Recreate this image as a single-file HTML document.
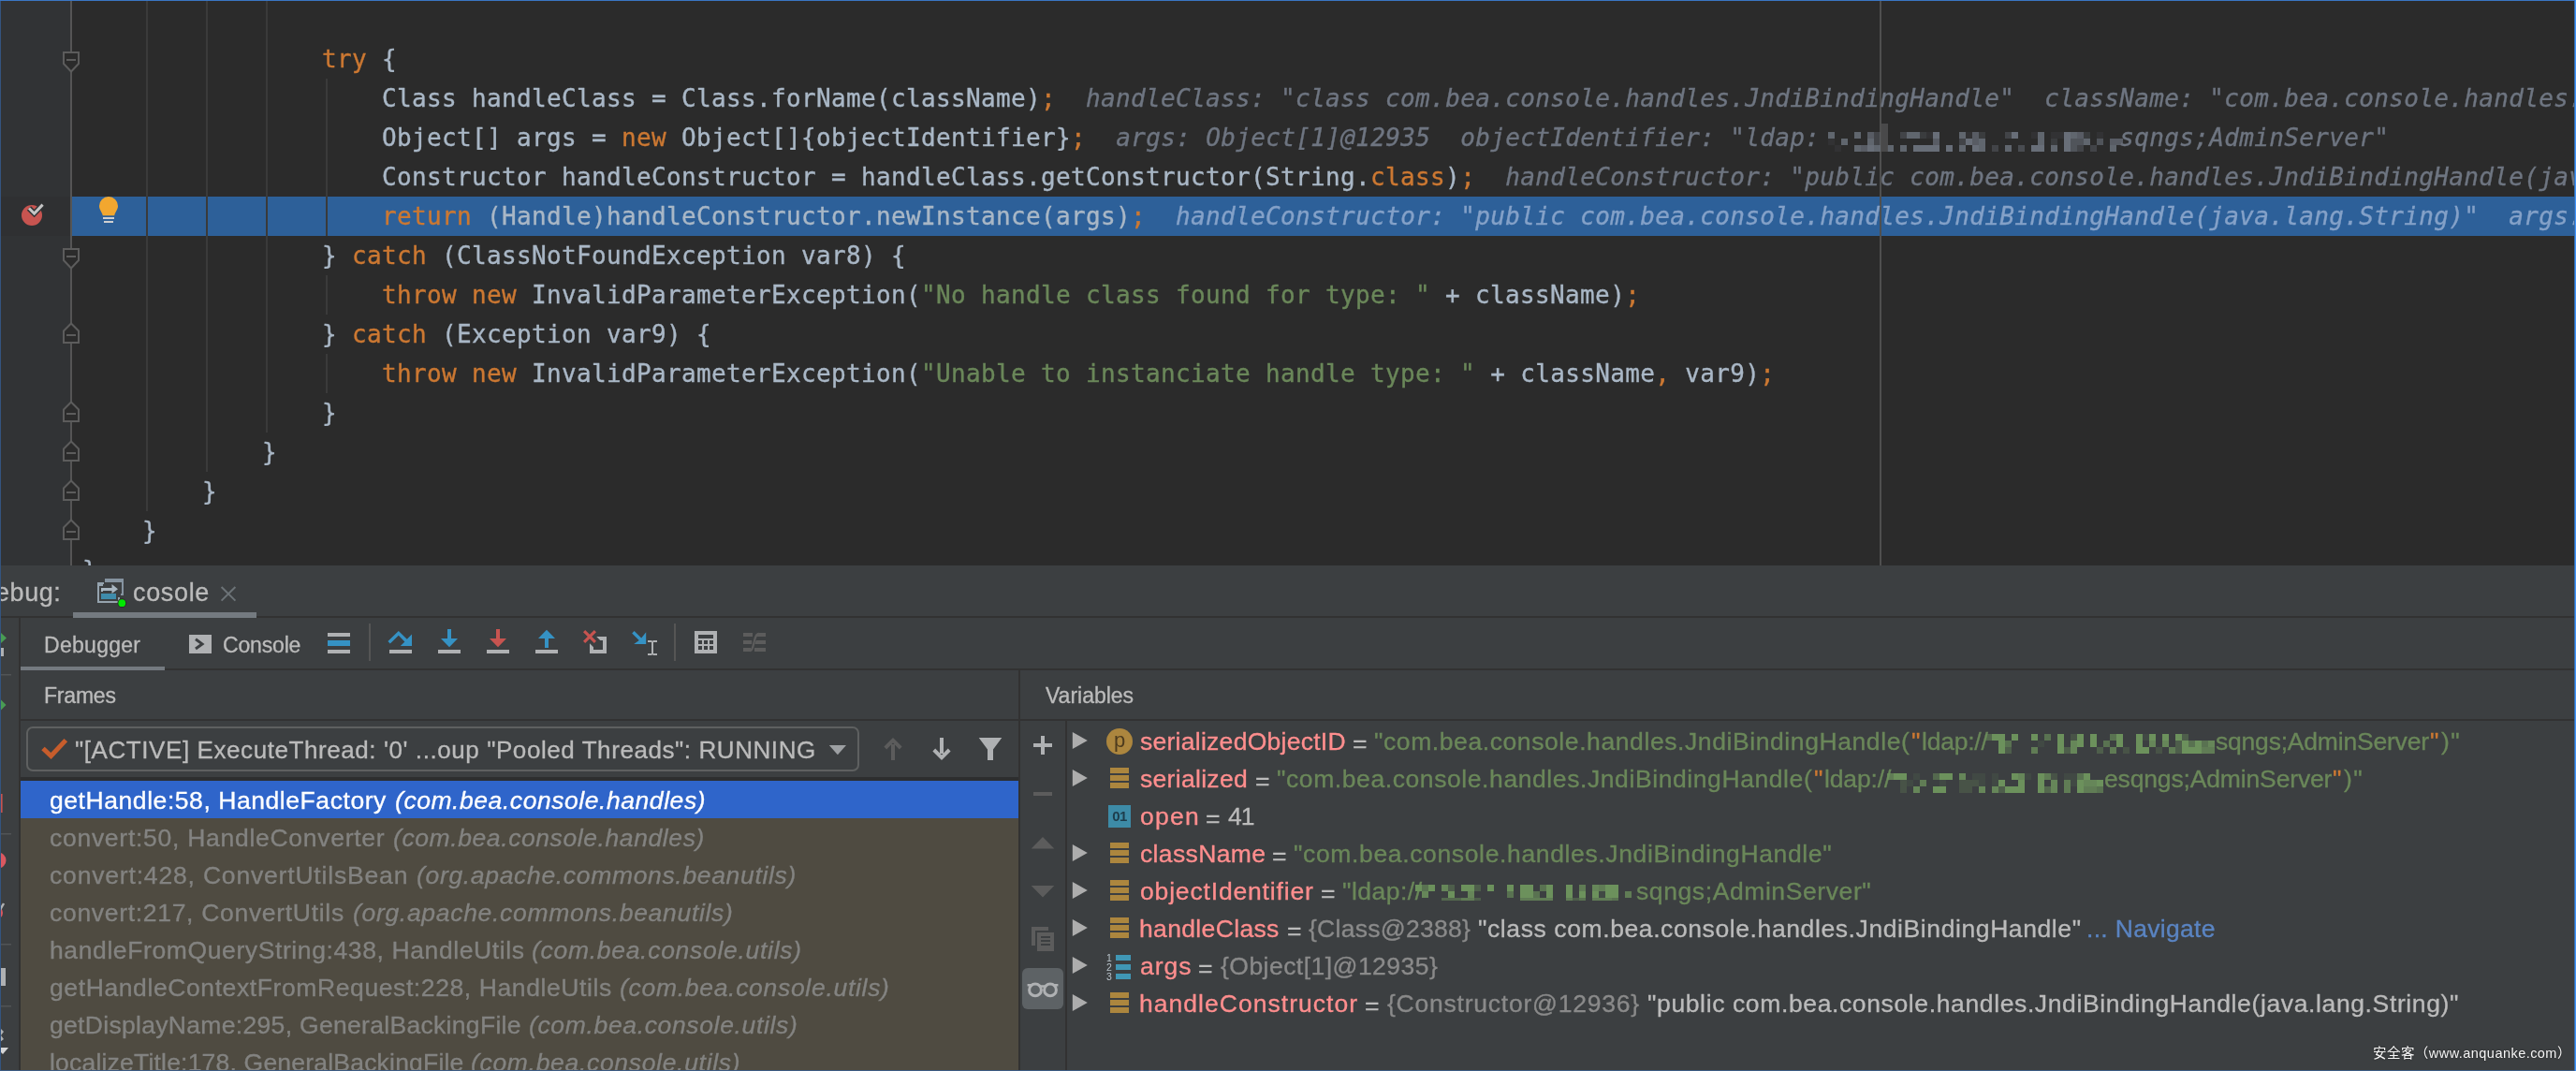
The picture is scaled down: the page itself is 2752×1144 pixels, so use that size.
<!DOCTYPE html>
<html lang="en"><head><meta charset="utf-8"><title>Debug - cosole</title>
<style>
html,body{margin:0;padding:0;background:#2b2b2b;}
body{width:2752px;height:1144px;overflow:hidden;}
#root{position:relative;width:2752px;height:1144px;overflow:hidden;background:#2b2b2b;}
#root div,#root svg,#root span.t{position:absolute;}
.code,.ui,span.t{will-change:transform;}
.code{font-family:"DejaVu Sans Mono","Liberation Mono",monospace;font-size:26px;line-height:42px;height:42px;white-space:pre;color:#a9b7c6;letter-spacing:0.348px;-webkit-text-stroke:0.35px currentColor;}
.code i{color:#6e7581;font-style:italic;}
.code b{font-weight:normal;color:#cc7832;}
.code u{text-decoration:none;color:#6a8759;}
.ui{font-family:"Liberation Sans",sans-serif;font-size:26px;line-height:40px;height:40px;white-space:pre;color:#bbbbbb;-webkit-text-stroke:0.33px currentColor;}
.ui i{font-style:italic;}
</style></head>
<body><div id="root">
<div style="left:0px;top:0px;width:76px;height:604px;background:#313335;"></div>
<div style="left:75px;top:0px;width:2px;height:604px;background:#555555;"></div>
<div style="left:1px;top:210px;width:74px;height:42px;background:#2f3032;"></div>
<div style="left:77px;top:210px;width:2675px;height:42px;background:#2d6099;"></div>
<div style="left:156px;top:0px;width:2px;height:546px;background:#3a3a3a;"></div>
<div style="left:220px;top:0px;width:2px;height:504px;background:#3a3a3a;"></div>
<div style="left:284px;top:0px;width:2px;height:462px;background:#3a3a3a;"></div>
<div style="left:348px;top:84px;width:2px;height:168px;background:#3a3a3a;"></div>
<div style="left:348px;top:294px;width:2px;height:42px;background:#3a3a3a;"></div>
<div style="left:348px;top:378px;width:2px;height:42px;background:#3a3a3a;"></div>
<div style="left:2008px;top:0px;width:2px;height:604px;background:#4f4f4f;"></div>
<div class="code" style="left:344.0px;top:42px;"><b>try</b> {</div>
<div class="code" style="left:408.0px;top:84px;">Class handleClass = Class.forName(className)<b>;</b>  <i>handleClass: "class com.bea.console.handles.JndiBindingHandle"  className: "com.bea.console.handles.JndiBindingHandle"</i></div>
<div class="code" style="left:408.0px;top:126px;">Object[] args = <b>new</b> Object[]{objectIdentifier}<b>;</b>  <i>args: Object[1]@12935  objectIdentifier: "ldap:</i>                    <i>sqngs;AdminServer"</i></div>
<div class="code" style="left:408.0px;top:168px;">Constructor handleConstructor = handleClass.getConstructor(String.<b>class</b>)<b>;</b>  <i>handleConstructor: "public com.bea.console.handles.JndiBindingHandle(java.lang.String)"</i></div>
<div class="code" style="left:408.0px;top:210px;"><b>return</b> (Handle)handleConstructor.newInstance(args)<b>;</b>  <i style="color:#84a1c8">handleConstructor: "public com.bea.console.handles.JndiBindingHandle(java.lang.String)"  args: Object[1]@12935</i></div>
<div class="code" style="left:344.0px;top:252px;">} <b>catch</b> (ClassNotFoundException var8) {</div>
<div class="code" style="left:408.0px;top:294px;"><b>throw new</b> InvalidParameterException(<u>"No handle class found for type: "</u> + className)<b>;</b></div>
<div class="code" style="left:344.0px;top:336px;">} <b>catch</b> (Exception var9) {</div>
<div class="code" style="left:408.0px;top:378px;"><b>throw new</b> InvalidParameterException(<u>"Unable to instanciate handle type: "</u> + className<b>,</b> var9)<b>;</b></div>
<div class="code" style="left:344.0px;top:420px;">}</div>
<div class="code" style="left:280.0px;top:462px;">}</div>
<div class="code" style="left:216.0px;top:504px;">}</div>
<div class="code" style="left:152.0px;top:546px;">}</div>
<div class="code" style="left:88.0px;top:588px;">}</div>
<div style="left:1953px;top:141px;width:7px;height:7px;background:rgba(104,110,120,0.88);"></div>
<div style="left:1981px;top:141px;width:7px;height:7px;background:rgba(104,110,120,0.88);"></div>
<div style="left:1995px;top:141px;width:7px;height:7px;background:rgba(104,110,120,0.75);"></div>
<div style="left:2002px;top:141px;width:7px;height:7px;background:rgba(104,110,120,0.38);"></div>
<div style="left:2030px;top:141px;width:7px;height:7px;background:rgba(104,110,120,0.38);"></div>
<div style="left:2037px;top:141px;width:7px;height:7px;background:rgba(104,110,120,0.88);"></div>
<div style="left:2044px;top:141px;width:7px;height:7px;background:rgba(104,110,120,0.88);"></div>
<div style="left:2051px;top:141px;width:7px;height:7px;background:rgba(104,110,120,0.25);"></div>
<div style="left:2058px;top:141px;width:7px;height:7px;background:rgba(104,110,120,0.12);"></div>
<div style="left:2065px;top:141px;width:7px;height:7px;background:rgba(104,110,120,1.00);"></div>
<div style="left:2093px;top:141px;width:7px;height:7px;background:rgba(104,110,120,0.88);"></div>
<div style="left:2100px;top:141px;width:7px;height:7px;background:rgba(104,110,120,0.12);"></div>
<div style="left:2107px;top:141px;width:7px;height:7px;background:rgba(104,110,120,0.75);"></div>
<div style="left:2114px;top:141px;width:7px;height:7px;background:rgba(104,110,120,0.25);"></div>
<div style="left:2142px;top:141px;width:7px;height:7px;background:rgba(104,110,120,0.38);"></div>
<div style="left:2149px;top:141px;width:7px;height:7px;background:rgba(104,110,120,1.00);"></div>
<div style="left:2170px;top:141px;width:7px;height:7px;background:rgba(104,110,120,0.12);"></div>
<div style="left:2177px;top:141px;width:7px;height:7px;background:rgba(104,110,120,0.88);"></div>
<div style="left:2191px;top:141px;width:7px;height:7px;background:rgba(104,110,120,0.12);"></div>
<div style="left:2198px;top:141px;width:7px;height:7px;background:rgba(104,110,120,0.12);"></div>
<div style="left:2205px;top:141px;width:7px;height:7px;background:rgba(104,110,120,1.00);"></div>
<div style="left:2212px;top:141px;width:7px;height:7px;background:rgba(104,110,120,0.88);"></div>
<div style="left:2219px;top:141px;width:7px;height:7px;background:rgba(104,110,120,0.75);"></div>
<div style="left:2226px;top:141px;width:7px;height:7px;background:rgba(104,110,120,0.25);"></div>
<div style="left:2240px;top:141px;width:7px;height:7px;background:rgba(104,110,120,0.12);"></div>
<div style="left:1953px;top:148px;width:7px;height:7px;background:rgba(104,110,120,0.12);"></div>
<div style="left:1967px;top:148px;width:7px;height:7px;background:rgba(104,110,120,0.88);"></div>
<div style="left:1995px;top:148px;width:7px;height:7px;background:rgba(104,110,120,0.88);"></div>
<div style="left:2002px;top:148px;width:7px;height:7px;background:rgba(104,110,120,0.38);"></div>
<div style="left:2065px;top:148px;width:7px;height:7px;background:rgba(104,110,120,0.75);"></div>
<div style="left:2093px;top:148px;width:7px;height:7px;background:rgba(104,110,120,0.38);"></div>
<div style="left:2100px;top:148px;width:7px;height:7px;background:rgba(104,110,120,1.00);"></div>
<div style="left:2107px;top:148px;width:7px;height:7px;background:rgba(104,110,120,0.75);"></div>
<div style="left:2114px;top:148px;width:7px;height:7px;background:rgba(104,110,120,0.88);"></div>
<div style="left:2177px;top:148px;width:7px;height:7px;background:rgba(104,110,120,0.88);"></div>
<div style="left:2191px;top:148px;width:7px;height:7px;background:rgba(104,110,120,0.25);"></div>
<div style="left:2205px;top:148px;width:7px;height:7px;background:rgba(104,110,120,1.00);"></div>
<div style="left:2212px;top:148px;width:7px;height:7px;background:rgba(104,110,120,0.62);"></div>
<div style="left:2219px;top:148px;width:7px;height:7px;background:rgba(104,110,120,0.62);"></div>
<div style="left:2226px;top:148px;width:7px;height:7px;background:rgba(104,110,120,0.88);"></div>
<div style="left:2240px;top:148px;width:7px;height:7px;background:rgba(104,110,120,0.62);"></div>
<div style="left:2254px;top:148px;width:7px;height:7px;background:rgba(104,110,120,0.75);"></div>
<div style="left:2261px;top:148px;width:7px;height:7px;background:rgba(104,110,120,0.75);"></div>
<div style="left:1960px;top:155px;width:7px;height:7px;background:rgba(104,110,120,0.12);"></div>
<div style="left:1981px;top:155px;width:7px;height:7px;background:rgba(104,110,120,0.88);"></div>
<div style="left:1988px;top:155px;width:7px;height:7px;background:rgba(104,110,120,0.75);"></div>
<div style="left:1995px;top:155px;width:7px;height:7px;background:rgba(104,110,120,1.00);"></div>
<div style="left:2002px;top:155px;width:7px;height:7px;background:rgba(104,110,120,0.88);"></div>
<div style="left:2016px;top:155px;width:7px;height:7px;background:rgba(104,110,120,0.88);"></div>
<div style="left:2030px;top:155px;width:7px;height:7px;background:rgba(104,110,120,0.88);"></div>
<div style="left:2044px;top:155px;width:7px;height:7px;background:rgba(104,110,120,1.00);"></div>
<div style="left:2051px;top:155px;width:7px;height:7px;background:rgba(104,110,120,1.00);"></div>
<div style="left:2058px;top:155px;width:7px;height:7px;background:rgba(104,110,120,1.00);"></div>
<div style="left:2065px;top:155px;width:7px;height:7px;background:rgba(104,110,120,1.00);"></div>
<div style="left:2079px;top:155px;width:7px;height:7px;background:rgba(104,110,120,1.00);"></div>
<div style="left:2093px;top:155px;width:7px;height:7px;background:rgba(104,110,120,0.88);"></div>
<div style="left:2107px;top:155px;width:7px;height:7px;background:rgba(104,110,120,1.00);"></div>
<div style="left:2114px;top:155px;width:7px;height:7px;background:rgba(104,110,120,0.88);"></div>
<div style="left:2128px;top:155px;width:7px;height:7px;background:rgba(104,110,120,0.38);"></div>
<div style="left:2142px;top:155px;width:7px;height:7px;background:rgba(104,110,120,0.88);"></div>
<div style="left:2156px;top:155px;width:7px;height:7px;background:rgba(104,110,120,0.50);"></div>
<div style="left:2170px;top:155px;width:7px;height:7px;background:rgba(104,110,120,1.00);"></div>
<div style="left:2177px;top:155px;width:7px;height:7px;background:rgba(104,110,120,1.00);"></div>
<div style="left:2191px;top:155px;width:7px;height:7px;background:rgba(104,110,120,0.88);"></div>
<div style="left:2205px;top:155px;width:7px;height:7px;background:rgba(104,110,120,1.00);"></div>
<div style="left:2212px;top:155px;width:7px;height:7px;background:rgba(104,110,120,0.62);"></div>
<div style="left:2219px;top:155px;width:7px;height:7px;background:rgba(104,110,120,0.38);"></div>
<div style="left:2233px;top:155px;width:7px;height:7px;background:rgba(104,110,120,0.38);"></div>
<div style="left:2254px;top:155px;width:7px;height:7px;background:rgba(104,110,120,0.88);"></div>
<div style="left:2010px;top:132px;width:7px;height:30px;background:rgba(76,76,78,0.9);"></div>
<svg style="left:65px;top:54px" width="22" height="25" viewBox="65 54 22 25"><path d="M68,56 H84 V68 L76,76.5 L68,68 Z" fill="#2b2b2b" stroke="#5c5c5c" stroke-width="2" stroke-linejoin="miter"/><rect x="71" y="63" width="10" height="2" fill="#5c5c5c"/></svg>
<svg style="left:65px;top:264px" width="22" height="25" viewBox="65 264 22 25"><path d="M68,266 H84 V278 L76,286.5 L68,278 Z" fill="#2b2b2b" stroke="#5c5c5c" stroke-width="2" stroke-linejoin="miter"/><rect x="71" y="273" width="10" height="2" fill="#5c5c5c"/></svg>
<svg style="left:65px;top:343px" width="22" height="25" viewBox="65 343 22 25"><path d="M76,345.5 L84,353.5 V366 H68 V353.5 Z" fill="#2b2b2b" stroke="#5c5c5c" stroke-width="2" stroke-linejoin="miter"/><rect x="71" y="357" width="10" height="2" fill="#5c5c5c"/></svg>
<svg style="left:65px;top:427px" width="22" height="25" viewBox="65 427 22 25"><path d="M76,429.5 L84,437.5 V450 H68 V437.5 Z" fill="#2b2b2b" stroke="#5c5c5c" stroke-width="2" stroke-linejoin="miter"/><rect x="71" y="441" width="10" height="2" fill="#5c5c5c"/></svg>
<svg style="left:65px;top:469px" width="22" height="25" viewBox="65 469 22 25"><path d="M76,471.5 L84,479.5 V492 H68 V479.5 Z" fill="#2b2b2b" stroke="#5c5c5c" stroke-width="2" stroke-linejoin="miter"/><rect x="71" y="483" width="10" height="2" fill="#5c5c5c"/></svg>
<svg style="left:65px;top:511px" width="22" height="25" viewBox="65 511 22 25"><path d="M76,513.5 L84,521.5 V534 H68 V521.5 Z" fill="#2b2b2b" stroke="#5c5c5c" stroke-width="2" stroke-linejoin="miter"/><rect x="71" y="525" width="10" height="2" fill="#5c5c5c"/></svg>
<svg style="left:65px;top:553px" width="22" height="25" viewBox="65 553 22 25"><path d="M76,555.5 L84,563.5 V576 H68 V563.5 Z" fill="#2b2b2b" stroke="#5c5c5c" stroke-width="2" stroke-linejoin="miter"/><rect x="71" y="567" width="10" height="2" fill="#5c5c5c"/></svg>
<svg style="left:20px;top:214px" width="30" height="30" viewBox="20 214 30 30"><circle cx="34" cy="230" r="11" fill="#c75450"/><path d="M31,222.5 L36.6,228 L45.6,218.6" fill="none" stroke="#313335" stroke-width="6" stroke-linecap="butt"/><path d="M31,222.5 L36.6,228 L45.6,218.6" fill="none" stroke="#c4c4c4" stroke-width="3" stroke-linecap="butt"/></svg>
<svg style="left:104px;top:208px" width="24" height="32" viewBox="104 208 24 32"><path d="M116,210 a10,10 0 0 1 10,10 c0,4 -2.5,5.5 -3.8,10.2 h-12.4 c-1.3,-4.7 -3.8,-6.2 -3.8,-10.2 a10,10 0 0 1 10,-10 z" fill="#f2a72f"/><rect x="110" y="232" width="12" height="2" fill="#d0d0d0"/><rect x="111" y="236" width="10" height="2" fill="#d0d0d0"/></svg>
<div style="left:0px;top:604px;width:2752px;height:540px;background:#3c3f41;"></div>
<div style="left:0px;top:658px;width:2752px;height:2px;background:#323232;"></div>
<div style="left:78px;top:654px;width:196px;height:6px;background:#747a80;"></div>
<span class="t ui" id="hdr_debug" style="left:-25.46px;top:612.64px;font-size:27px;color:#bbbbbb;letter-spacing:0.550px;">Debug:</span>
<span class="t ui" id="hdr_cosole" style="left:141.82px;top:612.64px;font-size:27px;color:#bbbbbb;letter-spacing:0.649px;">cosole</span>
<svg style="left:102px;top:616px" width="36" height="36" viewBox="102 616 36 36"><path d="M113,619 H131 V635 H129" fill="none" stroke="#8593a0" stroke-width="2"/><rect x="112" y="618" width="20" height="4" fill="#8593a0"/><path d="M105,623 H111 M105,623 V643 H127 V638" fill="none" stroke="#95a3ae" stroke-width="2"/><rect x="104" y="622" width="6" height="4" fill="#95a3ae"/><path d="M108,632 V628 H119.5 V624 L126,629.3 L119.5,634 V631 H110 V632 Z" fill="#a9b7c2"/><rect x="108" y="634" width="16" height="6" fill="#3f8cab"/><circle cx="130.3" cy="644.2" r="4.9" fill="#2b2b2b"/><circle cx="130.3" cy="644.2" r="3.9" fill="#00e800"/></svg>
<svg style="left:234px;top:624px" width="20" height="20" viewBox="234 624 20 20"><path d="M236.6,627 L251.4,641.6 M251.4,627 L236.6,641.6" stroke="#6c7377" stroke-width="2" fill="none"/></svg>
<div style="left:20px;top:660px;width:2px;height:484px;background:#323232;"></div>
<svg style="left:0;top:660px" width="20" height="484" viewBox="0 660 20 484"><path d="M1,676 L7,681.5 L1,687 Z" fill="#499c54"/><rect x="1" y="692" width="3" height="9" fill="#afb1b3"/><rect x="0" y="720" width="12" height="1.5" fill="#515456"/><path d="M1,747.5 L6.5,753 L1,758.5 Z" fill="#499c54"/><rect x="1" y="848" width="1.6" height="20" fill="#c75450"/><rect x="0" y="890" width="12" height="1.5" fill="#515456"/><circle cx="-2" cy="919" r="8.5" fill="#db5860"/><circle cx="-4" cy="975" r="7" fill="#db5860"/><path d="M0,972 L4,965" stroke="#afb1b3" stroke-width="2.5"/><rect x="0" y="1008" width="12" height="1.5" fill="#515456"/><rect x="1" y="1034" width="5" height="19" fill="#afb1b3"/><rect x="0" y="1074" width="12" height="1.5" fill="#515456"/><path d="M0,1098 L4,1102 L1,1106 L4,1110 L0,1113 Z" fill="#afb1b3"/><path d="M0,1119 H9 L3,1126 L0,1123 Z" fill="#d6d6d6"/></svg>
<div style="left:22px;top:714px;width:2730px;height:2px;background:#323232;"></div>
<div style="left:22px;top:712px;width:154px;height:4px;background:#747a80;"></div>
<span class="t ui" id="tab_debugger" style="left:46.86px;top:668.63px;font-size:23px;color:#bbbbbb;letter-spacing:0.287px;">Debugger</span>
<span class="t ui" id="tab_console" style="left:237.75px;top:668.63px;font-size:23px;color:#bbbbbb;letter-spacing:-0.166px;">Console</span>
<svg style="left:202px;top:678px" width="24" height="20" viewBox="0 0 24 20"><rect width="24" height="20" fill="#afb1b3"/><path d="M7,4.8 L14,9.9 L7,15" fill="none" stroke="#3c3f41" stroke-width="3"/></svg>
<svg style="left:346px;top:670px" width="32" height="32" viewBox="0 0 16 16"><rect x="2" y="3" width="12" height="2" fill="#afb1b3"/><rect x="2" y="7" width="12" height="3" fill="#3592c4"/><rect x="2" y="12" width="12" height="2" fill="#afb1b3"/></svg>
<div style="left:394px;top:666px;width:2px;height:40px;background:#555555;"></div>
<svg style="left:412px;top:670px" width="32" height="32" viewBox="0 0 16 16"><rect x="2" y="12" width="12" height="2" fill="#afb1b3"/><path d="M1.2,7.5 L6.9,2 L11.4,6.4 L14,3.7 V10 H7.9 L10.2,7.7 L6.9,4.4 L2.4,8.8 Z" fill="#3592c4"/></svg>
<svg style="left:464px;top:670px" width="32" height="32" viewBox="0 0 16 16"><rect x="2" y="12" width="12" height="2" fill="#afb1b3"/><path d="M7,1 H9 V6 H12.5 L8,10.6 L3.5,6 H7 Z" fill="#3592c4"/></svg>
<svg style="left:516px;top:670px" width="32" height="32" viewBox="0 0 16 16"><rect x="2" y="12" width="12" height="2" fill="#afb1b3"/><path d="M7,1 H9 V6 H12.5 L8,10.6 L3.5,6 H7 Z" fill="#c75450"/></svg>
<svg style="left:568px;top:670px" width="32" height="32" viewBox="0 0 16 16"><rect x="2" y="12" width="12" height="2" fill="#afb1b3"/><path d="M7,11 H9 V6 H12.5 L8,1.4 L3.5,6 H7 Z" fill="#3592c4"/></svg>
<svg style="left:620px;top:670px" width="32" height="32" viewBox="0 0 16 16"><path d="M8.6,5 H14 V14 H5 V8.6 L7,10.6 V12 H12 V7 H10.6 Z" fill="#afb1b3"/><path d="M2.6,1.5 L5,3.9 L7.4,1.5 L8.5,2.6 L6.1,5 L8.5,7.4 L7.4,8.5 L5,6.1 L2.6,8.5 L1.5,7.4 L3.9,5 L1.5,2.6 Z" fill="#c75450"/></svg>
<svg style="left:672px;top:670px" width="32" height="32" viewBox="0 0 16 16"><path d="M1.6,3.2 L2.8,2 L6.6,5.8 L9.1,2.6 V9 H2.6 L5.4,7 Z" fill="#3592c4"/><path d="M10,7 H12 L12.5,7.4 L13,7 H15 V8 H13 V14 H15 V15 H13 L12.5,14.6 L12,15 H10 V14 H12 V8 H10 Z" fill="#afb1b3"/></svg>
<div style="left:720px;top:666px;width:2px;height:40px;background:#555555;"></div>
<svg style="left:738px;top:670px" width="32" height="32" viewBox="0 0 16 16"><path fill-rule="evenodd" fill="#afb1b3" d="M2,2 H14 V14 H2 Z M4,4 V6 H12 V4 Z M4,7 V9 H6 V7 Z M4,10 V12 H6 V10 Z M7,7 V9 H9 V7 Z M7,10 V12 H9 V10 Z M10,7 V9 H12 V7 Z M10,10 V12 H12 V10 Z"/></svg>
<svg style="left:790px;top:670px" width="32" height="32" viewBox="0 0 16 16"><g fill="#5c5c5c"><path d="M2,3 H7 V5 H2 Z M2,7 H6.6 V9 H2 Z M2,11 H6 V13 H2 Z"/><path d="M9.6,3 H14 V5 H9 Z M8.8,7 H14 V9 H8.2 Z M8,11 H14 V13 H8 Z"/></g><path d="M5.5,12.6 C8,12.6 7.4,3.4 10.4,3.4" fill="none" stroke="#5c5c5c" stroke-width="1.1"/></svg>
<div style="left:22px;top:768px;width:2730px;height:2px;background:#323232;"></div>
<div style="left:1088px;top:716px;width:2px;height:428px;background:#323232;"></div>
<div style="left:1138px;top:770px;width:2px;height:374px;background:#323232;"></div>
<span class="t ui" id="lbl_frames" style="left:46.66px;top:722.63px;font-size:23px;color:#bbbbbb;letter-spacing:-0.202px;">Frames</span>
<span class="t ui" id="lbl_vars" style="left:1116.70px;top:722.63px;font-size:23px;color:#bbbbbb;letter-spacing:-0.010px;">Variables</span>
<div style="left:28px;top:776px;width:886px;height:44px;border:2px solid #5e6060;border-radius:7px;"></div>
<svg style="left:42px;top:786px" width="32" height="28" viewBox="42 786 32 28"><path d="M46,799.5 L54.5,807.5 L70.3,790.6" fill="none" stroke="#c75d2c" stroke-width="5"/></svg>
<span class="t ui" id="thread" style="left:80.46px;top:780.99px;font-size:26px;color:#bbbbbb;letter-spacing:0.574px;">"[ACTIVE] ExecuteThread: '0' ...oup "Pooled Threads": RUNNING</span>
<svg style="left:884px;top:794px" width="22" height="14" viewBox="884 794 22 14"><path d="M885.8,796 H904 L894.9,806.2 Z" fill="#9da0a3"/></svg>
<svg style="left:942px;top:786px" width="24" height="28" viewBox="942 786 24 28"><path d="M952,812 V795 H956 V812 Z" fill="#5c5c5c"/><path d="M944.4,797.6 L954,788 L963.6,797.6 L960.8,800.4 L954,793.6 L947.2,800.4 Z" fill="#5c5c5c"/></svg>
<svg style="left:994px;top:786px" width="24" height="28" viewBox="994 786 24 28"><path d="M1004,788 V805 H1008 V788 Z" fill="#afb1b3"/><path d="M996.4,802.4 L1006,812 L1015.6,802.4 L1012.8,799.6 L1006,806.4 L999.2,799.6 Z" fill="#afb1b3"/></svg>
<svg style="left:1044px;top:786px" width="28" height="28" viewBox="1044 786 28 28"><path d="M1045.7,788 H1070.3 L1061,800.4 V812 H1055 V800.4 Z" fill="#afb1b3"/></svg>
<div style="left:22px;top:830px;width:1066px;height:4px;background:#2d2e2f;"></div>
<div style="left:22px;top:834px;width:1066px;height:310px;background:#4f4b41;"></div>
<div style="left:22px;top:834px;width:1066px;height:40px;background:#2f65ca;"></div>
<span class="t ui" id="fr0a" style="left:53.44px;top:834.82px;font-size:26.5px;color:#ffffff;letter-spacing:0.563px;">getHandle:58, HandleFactory</span>
<span class="t ui" id="fr0b" style="left:422.31px;top:834.82px;font-size:26.5px;color:#ffffff;letter-spacing:0.556px;"><i>(com.bea.console.handles)</i></span>
<span class="t ui" id="fr1a" style="left:53.44px;top:874.82px;font-size:26.5px;color:#838381;letter-spacing:0.723px;">convert:50, HandleConverter</span>
<span class="t ui" id="fr1b" style="left:420.21px;top:874.82px;font-size:26.5px;color:#838381;letter-spacing:0.589px;"><i>(com.bea.console.handles)</i></span>
<span class="t ui" id="fr2a" style="left:53.44px;top:914.82px;font-size:26.5px;color:#838381;letter-spacing:0.821px;">convert:428, ConvertUtilsBean</span>
<span class="t ui" id="fr2b" style="left:444.51px;top:914.82px;font-size:26.5px;color:#838381;letter-spacing:0.669px;"><i>(org.apache.commons.beanutils)</i></span>
<span class="t ui" id="fr3a" style="left:53.44px;top:954.82px;font-size:26.5px;color:#838381;letter-spacing:0.694px;">convert:217, ConvertUtils</span>
<span class="t ui" id="fr3b" style="left:376.61px;top:954.82px;font-size:26.5px;color:#838381;letter-spacing:0.687px;"><i>(org.apache.commons.beanutils)</i></span>
<span class="t ui" id="fr4a" style="left:52.78px;top:994.82px;font-size:26.5px;color:#838381;letter-spacing:0.607px;">handleFromQueryString:438, HandleUtils</span>
<span class="t ui" id="fr4b" style="left:568.31px;top:994.82px;font-size:26.5px;color:#838381;letter-spacing:0.707px;"><i>(com.bea.console.utils)</i></span>
<span class="t ui" id="fr5a" style="left:53.44px;top:1034.82px;font-size:26.5px;color:#838381;letter-spacing:0.600px;">getHandleContextFromRequest:228, HandleUtils</span>
<span class="t ui" id="fr5b" style="left:662.31px;top:1034.82px;font-size:26.5px;color:#838381;letter-spacing:0.702px;"><i>(com.bea.console.utils)</i></span>
<span class="t ui" id="fr6a" style="left:53.44px;top:1074.82px;font-size:26.5px;color:#838381;letter-spacing:0.313px;">getDisplayName:295, GeneralBackingFile</span>
<span class="t ui" id="fr6b" style="left:565.31px;top:1074.82px;font-size:26.5px;color:#838381;letter-spacing:0.648px;"><i>(com.bea.console.utils)</i></span>
<span class="t ui" id="fr7a" style="left:52.78px;top:1114.82px;font-size:26.5px;color:#838381;letter-spacing:0.203px;">localizeTitle:178, GeneralBackingFile</span>
<span class="t ui" id="fr7b" style="left:502.61px;top:1114.82px;font-size:26.5px;color:#838381;letter-spacing:0.684px;"><i>(com.bea.console.utils)</i></span>
<svg style="left:1102px;top:784px" width="24" height="24" viewBox="1102 784 24 24"><path d="M1112,786 H1116 V794 H1124 V798 H1116 V806 H1112 V798 H1104 V794 H1112 Z" fill="#afb1b3"/></svg>
<div style="left:1104px;top:846px;width:20px;height:4px;background:#5c5c5c;"></div>
<svg style="left:1100px;top:892px" width="28" height="16" viewBox="1100 892 28 16"><path d="M1101.7,906.4 L1114,894 L1126.3,906.4 Z" fill="#5c5c5c"/></svg>
<svg style="left:1100px;top:944px" width="28" height="16" viewBox="1100 944 28 16"><path d="M1101.7,946 L1114,958.6 L1126.3,946 Z" fill="#5c5c5c"/></svg>
<svg style="left:1100px;top:988px" width="28" height="30" viewBox="1100 988 28 30"><path d="M1102,990 H1120 V994 H1106 V1010 H1102 Z" fill="#5c5c5c"/><path fill-rule="evenodd" d="M1108,996 H1126 V1016 H1108 Z M1112,1000 V1002 H1122 V1000 Z M1112,1004 V1006 H1122 V1004 Z M1112,1008 V1010 H1122 V1008 Z" fill="#5c5c5c"/></svg>
<div style="left:1092px;top:1034px;width:44px;height:44px;border-radius:6px;background:#5d6265;"></div>
<svg style="left:1094px;top:1040px" width="40" height="32" viewBox="1094 1040 40 32"><g fill="none" stroke="#afb1b3" stroke-width="3"><circle cx="1106" cy="1057.4" r="6.4"/><circle cx="1122" cy="1057.4" r="6.4"/></g><path d="M1097.6,1051 H1102.5 V1053.5 H1097.6 Z M1125.5,1051 H1130.4 V1053.5 H1125.5 Z M1111.5,1052.2 H1116.5 V1054.8 H1111.5 Z" fill="#afb1b3"/></svg>
<svg style="left:1145px;top:781px" width="18" height="20" viewBox="1145 781 18 20"><path d="M1145.8,782 L1161.8,791 L1145.8,800 Z" fill="#adadad"/></svg>
<svg style="left:1145px;top:821px" width="18" height="20" viewBox="1145 821 18 20"><path d="M1145.8,822 L1161.8,831 L1145.8,840 Z" fill="#adadad"/></svg>
<svg style="left:1145px;top:901px" width="18" height="20" viewBox="1145 901 18 20"><path d="M1145.8,902 L1161.8,911 L1145.8,920 Z" fill="#adadad"/></svg>
<svg style="left:1145px;top:941px" width="18" height="20" viewBox="1145 941 18 20"><path d="M1145.8,942 L1161.8,951 L1145.8,960 Z" fill="#adadad"/></svg>
<svg style="left:1145px;top:981px" width="18" height="20" viewBox="1145 981 18 20"><path d="M1145.8,982 L1161.8,991 L1145.8,1000 Z" fill="#adadad"/></svg>
<svg style="left:1145px;top:1021px" width="18" height="20" viewBox="1145 1021 18 20"><path d="M1145.8,1022 L1161.8,1031 L1145.8,1040 Z" fill="#adadad"/></svg>
<svg style="left:1145px;top:1061px" width="18" height="20" viewBox="1145 1061 18 20"><path d="M1145.8,1062 L1161.8,1071 L1145.8,1080 Z" fill="#adadad"/></svg>
<div style="left:1186px;top:820px;width:20px;height:6px;background:#ac863e;"></div>
<div style="left:1186px;top:828px;width:20px;height:6px;background:#ac863e;"></div>
<div style="left:1186px;top:836px;width:20px;height:6px;background:#ac863e;"></div>
<div style="left:1186px;top:900px;width:20px;height:6px;background:#ac863e;"></div>
<div style="left:1186px;top:908px;width:20px;height:6px;background:#ac863e;"></div>
<div style="left:1186px;top:916px;width:20px;height:6px;background:#ac863e;"></div>
<div style="left:1186px;top:940px;width:20px;height:6px;background:#ac863e;"></div>
<div style="left:1186px;top:948px;width:20px;height:6px;background:#ac863e;"></div>
<div style="left:1186px;top:956px;width:20px;height:6px;background:#ac863e;"></div>
<div style="left:1186px;top:980px;width:20px;height:6px;background:#ac863e;"></div>
<div style="left:1186px;top:988px;width:20px;height:6px;background:#ac863e;"></div>
<div style="left:1186px;top:996px;width:20px;height:6px;background:#ac863e;"></div>
<div style="left:1186px;top:1060px;width:20px;height:6px;background:#ac863e;"></div>
<div style="left:1186px;top:1068px;width:20px;height:6px;background:#ac863e;"></div>
<div style="left:1186px;top:1076px;width:20px;height:6px;background:#ac863e;"></div>
<div style="left:1182px;top:778px;width:28px;height:28px;border-radius:14px;background:#ac863e;"></div>
<span class="t" style="left:1182px;top:776.5px;width:28px;height:28px;line-height:28px;text-align:center;font-family:'Liberation Sans',sans-serif;font-size:22px;color:#4d3b1e;">p</span>
<div style="left:1184px;top:860px;width:24px;height:24px;background:#3d8ba7;"></div>
<span class="t" style="left:1184px;top:860px;width:24px;height:24px;line-height:24px;text-align:center;font-family:'Liberation Sans',sans-serif;font-size:15px;font-weight:bold;letter-spacing:-0.5px;color:#1d3d4c;">01</span>
<div style="left:1192px;top:1020px;width:16px;height:6px;background:#4097b5;"></div>
<span class="t" style="left:1180px;top:1016.5px;width:10px;height:12px;line-height:12px;text-align:center;font-family:'Liberation Sans',sans-serif;font-size:10.5px;color:#b9c3cb;">1</span>
<div style="left:1192px;top:1030px;width:16px;height:6px;background:#4097b5;"></div>
<span class="t" style="left:1180px;top:1026.5px;width:10px;height:12px;line-height:12px;text-align:center;font-family:'Liberation Sans',sans-serif;font-size:10.5px;color:#b9c3cb;">2</span>
<div style="left:1192px;top:1040px;width:16px;height:6px;background:#4097b5;"></div>
<span class="t" style="left:1180px;top:1036.5px;width:10px;height:12px;line-height:12px;text-align:center;font-family:'Liberation Sans',sans-serif;font-size:10.5px;color:#b9c3cb;">3</span>
<span class="t ui" id="v0_0" style="left:1217.94px;top:772.32px;font-size:26.5px;color:#ff8e8e;letter-spacing:0.270px;">serializedObjectID</span>
<span class="t ui" id="v0_1" style="left:1444.66px;top:773.82px;font-size:26.5px;color:#bbbbbb;letter-spacing:0.000px;">=</span>
<span class="t ui" id="v0_2" style="left:1467.94px;top:772.32px;font-size:26.5px;color:#6a8759;letter-spacing:0.588px;">"com.bea.console.handles.JndiBindingHandle(</span>
<span class="t ui" id="v0_3" style="left:2042.09px;top:772.32px;font-size:26.5px;color:#cc7832;letter-spacing:0.000px;">"</span>
<span class="t ui" id="v0_4" style="left:2053.18px;top:772.32px;font-size:26.5px;color:#6a8759;letter-spacing:-0.240px;">ldap://</span>
<span class="t ui" id="v0_5" style="left:2367.34px;top:772.32px;font-size:26.5px;color:#6a8759;letter-spacing:-0.203px;">sqngs;AdminServer</span>
<span class="t ui" id="v0_6" style="left:2596.09px;top:772.32px;font-size:26.5px;color:#cc7832;letter-spacing:0.000px;">"</span>
<span class="t ui" id="v0_7" style="left:2607.95px;top:772.32px;font-size:26.5px;color:#6a8759;letter-spacing:1.500px;">)"</span>
<span class="t ui" id="v1_0" style="left:1217.94px;top:812.32px;font-size:26.5px;color:#ff8e8e;letter-spacing:0.303px;">serialized</span>
<span class="t ui" id="v1_1" style="left:1340.61px;top:813.82px;font-size:26.5px;color:#bbbbbb;letter-spacing:0.000px;">=</span>
<span class="t ui" id="v1_2" style="left:1364.34px;top:812.32px;font-size:26.5px;color:#6a8759;letter-spacing:0.586px;">"com.bea.console.handles.JndiBindingHandle(</span>
<span class="t ui" id="v1_3" style="left:1938.19px;top:812.32px;font-size:26.5px;color:#cc7832;letter-spacing:0.000px;">"</span>
<span class="t ui" id="v1_4" style="left:1948.68px;top:812.32px;font-size:26.5px;color:#6a8759;letter-spacing:-0.156px;">ldap://</span>
<span class="t ui" id="v1_5" style="left:2247.94px;top:812.32px;font-size:26.5px;color:#6a8759;letter-spacing:-0.152px;">esqngs;AdminServer</span>
<span class="t ui" id="v1_6" style="left:2492.29px;top:812.32px;font-size:26.5px;color:#cc7832;letter-spacing:0.000px;">"</span>
<span class="t ui" id="v1_7" style="left:2504.10px;top:812.32px;font-size:26.5px;color:#6a8759;letter-spacing:1.500px;">)"</span>
<span class="t ui" id="v2_0" style="left:1217.54px;top:852.32px;font-size:26.5px;color:#ff8e8e;letter-spacing:1.276px;">open</span>
<span class="t ui" id="v2_1" style="left:1288.46px;top:853.82px;font-size:26.5px;color:#bbbbbb;letter-spacing:0.000px;">=</span>
<span class="t ui" id="v2_2" style="left:1312.15px;top:852.32px;font-size:26.5px;color:#bbbbbb;letter-spacing:-1.000px;">41</span>
<span class="t ui" id="v3_0" style="left:1217.54px;top:892.32px;font-size:26.5px;color:#ff8e8e;letter-spacing:0.359px;">className</span>
<span class="t ui" id="v3_1" style="left:1359.06px;top:893.82px;font-size:26.5px;color:#bbbbbb;letter-spacing:0.000px;">=</span>
<span class="t ui" id="v3_2" style="left:1381.94px;top:892.32px;font-size:26.5px;color:#6a8759;letter-spacing:0.641px;">"com.bea.console.handles.JndiBindingHandle"</span>
<span class="t ui" id="v4_0" style="left:1217.54px;top:932.32px;font-size:26.5px;color:#ff8e8e;letter-spacing:0.830px;">objectIdentifier</span>
<span class="t ui" id="v4_1" style="left:1410.56px;top:933.82px;font-size:26.5px;color:#bbbbbb;letter-spacing:0.000px;">=</span>
<span class="t ui" id="v4_2" style="left:1433.94px;top:932.32px;font-size:26.5px;color:#6a8759;letter-spacing:0.485px;">"ldap://</span>
<span class="t ui" id="v4_3" style="left:1748.34px;top:932.32px;font-size:26.5px;color:#6a8759;letter-spacing:0.592px;">sqngs;AdminServer"</span>
<span class="t ui" id="v5_0" style="left:1216.88px;top:972.32px;font-size:26.5px;color:#ff8e8e;letter-spacing:0.351px;">handleClass</span>
<span class="t ui" id="v5_1" style="left:1374.61px;top:973.82px;font-size:26.5px;color:#bbbbbb;letter-spacing:0.000px;">=</span>
<span class="t ui" id="v5_2" style="left:1398.10px;top:972.32px;font-size:26.5px;color:#8a8a8a;letter-spacing:0.267px;">{Class@2388}</span>
<span class="t ui" id="v5_3" style="left:1578.94px;top:972.32px;font-size:26.5px;color:#bbbbbb;letter-spacing:0.597px;">"class com.bea.console.handles.JndiBindingHandle"</span>
<span class="t ui" id="v5_4" style="left:2229.31px;top:972.32px;font-size:26.5px;color:#5a84c2;letter-spacing:0.312px;">... Navigate</span>
<span class="t ui" id="v6_0" style="left:1217.54px;top:1012.32px;font-size:26.5px;color:#ff8e8e;letter-spacing:0.942px;">args</span>
<span class="t ui" id="v6_1" style="left:1280.16px;top:1013.82px;font-size:26.5px;color:#bbbbbb;letter-spacing:0.000px;">=</span>
<span class="t ui" id="v6_2" style="left:1303.60px;top:1012.32px;font-size:26.5px;color:#8a8a8a;letter-spacing:0.463px;">{Object[1]@12935}</span>
<span class="t ui" id="v7_0" style="left:1216.88px;top:1052.32px;font-size:26.5px;color:#ff8e8e;letter-spacing:1.033px;">handleConstructor</span>
<span class="t ui" id="v7_1" style="left:1458.31px;top:1053.82px;font-size:26.5px;color:#bbbbbb;letter-spacing:0.000px;">=</span>
<span class="t ui" id="v7_2" style="left:1482.30px;top:1052.32px;font-size:26.5px;color:#8a8a8a;letter-spacing:0.767px;">{Constructor@12936}</span>
<span class="t ui" id="v7_3" style="left:1759.64px;top:1052.32px;font-size:26.5px;color:#bbbbbb;letter-spacing:0.624px;">"public com.bea.console.handles.JndiBindingHandle(java.lang.String)"</span>
<div style="left:2121px;top:784px;width:7px;height:7px;background:rgba(108,145,92,0.50);"></div>
<div style="left:2128px;top:784px;width:7px;height:7px;background:rgba(108,145,92,1.00);"></div>
<div style="left:2135px;top:784px;width:7px;height:7px;background:rgba(108,145,92,1.00);"></div>
<div style="left:2149px;top:784px;width:7px;height:7px;background:rgba(108,145,92,1.00);"></div>
<div style="left:2170px;top:784px;width:7px;height:7px;background:rgba(108,145,92,1.00);"></div>
<div style="left:2184px;top:784px;width:7px;height:7px;background:rgba(108,145,92,0.62);"></div>
<div style="left:2198px;top:784px;width:7px;height:7px;background:rgba(108,145,92,1.00);"></div>
<div style="left:2212px;top:784px;width:7px;height:7px;background:rgba(108,145,92,0.25);"></div>
<div style="left:2219px;top:784px;width:7px;height:7px;background:rgba(108,145,92,1.00);"></div>
<div style="left:2233px;top:784px;width:7px;height:7px;background:rgba(108,145,92,1.00);"></div>
<div style="left:2254px;top:784px;width:7px;height:7px;background:rgba(108,145,92,0.62);"></div>
<div style="left:2261px;top:784px;width:7px;height:7px;background:rgba(108,145,92,1.00);"></div>
<div style="left:2282px;top:784px;width:7px;height:7px;background:rgba(108,145,92,1.00);"></div>
<div style="left:2289px;top:784px;width:7px;height:7px;background:rgba(108,145,92,0.12);"></div>
<div style="left:2296px;top:784px;width:7px;height:7px;background:rgba(108,145,92,1.00);"></div>
<div style="left:2310px;top:784px;width:7px;height:7px;background:rgba(108,145,92,1.00);"></div>
<div style="left:2324px;top:784px;width:7px;height:7px;background:rgba(108,145,92,1.00);"></div>
<div style="left:2331px;top:784px;width:7px;height:7px;background:rgba(108,145,92,0.38);"></div>
<div style="left:2135px;top:791px;width:7px;height:7px;background:rgba(108,145,92,1.00);"></div>
<div style="left:2142px;top:791px;width:7px;height:7px;background:rgba(108,145,92,0.62);"></div>
<div style="left:2177px;top:791px;width:7px;height:7px;background:rgba(108,145,92,0.12);"></div>
<div style="left:2198px;top:791px;width:7px;height:7px;background:rgba(108,145,92,1.00);"></div>
<div style="left:2212px;top:791px;width:7px;height:7px;background:rgba(108,145,92,0.88);"></div>
<div style="left:2219px;top:791px;width:7px;height:7px;background:rgba(108,145,92,1.00);"></div>
<div style="left:2233px;top:791px;width:7px;height:7px;background:rgba(108,145,92,1.00);"></div>
<div style="left:2247px;top:791px;width:7px;height:7px;background:rgba(108,145,92,0.62);"></div>
<div style="left:2261px;top:791px;width:7px;height:7px;background:rgba(108,145,92,1.00);"></div>
<div style="left:2282px;top:791px;width:7px;height:7px;background:rgba(108,145,92,1.00);"></div>
<div style="left:2296px;top:791px;width:7px;height:7px;background:rgba(108,145,92,0.88);"></div>
<div style="left:2310px;top:791px;width:7px;height:7px;background:rgba(108,145,92,0.88);"></div>
<div style="left:2324px;top:791px;width:7px;height:7px;background:rgba(108,145,92,0.38);"></div>
<div style="left:2331px;top:791px;width:7px;height:7px;background:rgba(108,145,92,1.00);"></div>
<div style="left:2338px;top:791px;width:7px;height:7px;background:rgba(108,145,92,0.62);"></div>
<div style="left:2345px;top:791px;width:7px;height:7px;background:rgba(108,145,92,1.00);"></div>
<div style="left:2352px;top:791px;width:7px;height:7px;background:rgba(108,145,92,0.62);"></div>
<div style="left:2359px;top:791px;width:7px;height:7px;background:rgba(108,145,92,0.88);"></div>
<div style="left:2135px;top:798px;width:7px;height:7px;background:rgba(108,145,92,1.00);"></div>
<div style="left:2142px;top:798px;width:7px;height:7px;background:rgba(108,145,92,0.38);"></div>
<div style="left:2170px;top:798px;width:7px;height:7px;background:rgba(108,145,92,0.75);"></div>
<div style="left:2198px;top:798px;width:7px;height:7px;background:rgba(108,145,92,1.00);"></div>
<div style="left:2205px;top:798px;width:7px;height:7px;background:rgba(108,145,92,0.38);"></div>
<div style="left:2212px;top:798px;width:7px;height:7px;background:rgba(108,145,92,0.88);"></div>
<div style="left:2240px;top:798px;width:7px;height:7px;background:rgba(108,145,92,0.38);"></div>
<div style="left:2254px;top:798px;width:7px;height:7px;background:rgba(108,145,92,0.75);"></div>
<div style="left:2268px;top:798px;width:7px;height:7px;background:rgba(108,145,92,0.25);"></div>
<div style="left:2282px;top:798px;width:7px;height:7px;background:rgba(108,145,92,1.00);"></div>
<div style="left:2289px;top:798px;width:7px;height:7px;background:rgba(108,145,92,1.00);"></div>
<div style="left:2303px;top:798px;width:7px;height:7px;background:rgba(108,145,92,0.25);"></div>
<div style="left:2317px;top:798px;width:7px;height:7px;background:rgba(108,145,92,0.75);"></div>
<div style="left:2324px;top:798px;width:7px;height:7px;background:rgba(108,145,92,0.38);"></div>
<div style="left:2331px;top:798px;width:7px;height:7px;background:rgba(108,145,92,1.00);"></div>
<div style="left:2338px;top:798px;width:7px;height:7px;background:rgba(108,145,92,1.00);"></div>
<div style="left:2345px;top:798px;width:7px;height:7px;background:rgba(108,145,92,1.00);"></div>
<div style="left:2352px;top:798px;width:7px;height:7px;background:rgba(108,145,92,0.75);"></div>
<div style="left:2359px;top:798px;width:7px;height:7px;background:rgba(108,145,92,0.75);"></div>
<div style="left:2016px;top:826px;width:7px;height:7px;background:rgba(108,145,92,0.75);"></div>
<div style="left:2023px;top:826px;width:7px;height:7px;background:rgba(108,145,92,1.00);"></div>
<div style="left:2030px;top:826px;width:7px;height:7px;background:rgba(108,145,92,1.00);"></div>
<div style="left:2044px;top:826px;width:7px;height:7px;background:rgba(108,145,92,0.12);"></div>
<div style="left:2065px;top:826px;width:7px;height:7px;background:rgba(108,145,92,0.50);"></div>
<div style="left:2072px;top:826px;width:7px;height:7px;background:rgba(108,145,92,1.00);"></div>
<div style="left:2079px;top:826px;width:7px;height:7px;background:rgba(108,145,92,1.00);"></div>
<div style="left:2093px;top:826px;width:7px;height:7px;background:rgba(108,145,92,0.88);"></div>
<div style="left:2107px;top:826px;width:7px;height:7px;background:rgba(108,145,92,0.12);"></div>
<div style="left:2114px;top:826px;width:7px;height:7px;background:rgba(108,145,92,0.12);"></div>
<div style="left:2128px;top:826px;width:7px;height:7px;background:rgba(108,145,92,0.12);"></div>
<div style="left:2149px;top:826px;width:7px;height:7px;background:rgba(108,145,92,1.00);"></div>
<div style="left:2156px;top:826px;width:7px;height:7px;background:rgba(108,145,92,0.88);"></div>
<div style="left:2163px;top:826px;width:7px;height:7px;background:rgba(108,145,92,0.12);"></div>
<div style="left:2177px;top:826px;width:7px;height:7px;background:rgba(108,145,92,1.00);"></div>
<div style="left:2184px;top:826px;width:7px;height:7px;background:rgba(108,145,92,0.75);"></div>
<div style="left:2191px;top:826px;width:7px;height:7px;background:rgba(108,145,92,0.25);"></div>
<div style="left:2205px;top:826px;width:7px;height:7px;background:rgba(108,145,92,0.12);"></div>
<div style="left:2212px;top:826px;width:7px;height:7px;background:rgba(108,145,92,0.12);"></div>
<div style="left:2219px;top:826px;width:7px;height:7px;background:rgba(108,145,92,0.62);"></div>
<div style="left:2226px;top:826px;width:7px;height:7px;background:rgba(108,145,92,1.00);"></div>
<div style="left:2030px;top:833px;width:7px;height:7px;background:rgba(108,145,92,0.25);"></div>
<div style="left:2037px;top:833px;width:7px;height:7px;background:rgba(108,145,92,0.12);"></div>
<div style="left:2051px;top:833px;width:7px;height:7px;background:rgba(108,145,92,0.75);"></div>
<div style="left:2072px;top:833px;width:7px;height:7px;background:rgba(108,145,92,0.12);"></div>
<div style="left:2093px;top:833px;width:7px;height:7px;background:rgba(108,145,92,0.25);"></div>
<div style="left:2100px;top:833px;width:7px;height:7px;background:rgba(108,145,92,0.25);"></div>
<div style="left:2107px;top:833px;width:7px;height:7px;background:rgba(108,145,92,0.25);"></div>
<div style="left:2114px;top:833px;width:7px;height:7px;background:rgba(108,145,92,0.12);"></div>
<div style="left:2128px;top:833px;width:7px;height:7px;background:rgba(108,145,92,0.12);"></div>
<div style="left:2135px;top:833px;width:7px;height:7px;background:rgba(108,145,92,1.00);"></div>
<div style="left:2156px;top:833px;width:7px;height:7px;background:rgba(108,145,92,1.00);"></div>
<div style="left:2177px;top:833px;width:7px;height:7px;background:rgba(108,145,92,1.00);"></div>
<div style="left:2191px;top:833px;width:7px;height:7px;background:rgba(108,145,92,0.88);"></div>
<div style="left:2205px;top:833px;width:7px;height:7px;background:rgba(108,145,92,0.75);"></div>
<div style="left:2212px;top:833px;width:7px;height:7px;background:rgba(108,145,92,0.12);"></div>
<div style="left:2219px;top:833px;width:7px;height:7px;background:rgba(108,145,92,1.00);"></div>
<div style="left:2226px;top:833px;width:7px;height:7px;background:rgba(108,145,92,0.88);"></div>
<div style="left:2233px;top:833px;width:7px;height:7px;background:rgba(108,145,92,0.88);"></div>
<div style="left:2240px;top:833px;width:7px;height:7px;background:rgba(108,145,92,1.00);"></div>
<div style="left:2030px;top:840px;width:7px;height:7px;background:rgba(108,145,92,0.25);"></div>
<div style="left:2044px;top:840px;width:7px;height:7px;background:rgba(108,145,92,0.88);"></div>
<div style="left:2065px;top:840px;width:7px;height:7px;background:rgba(108,145,92,1.00);"></div>
<div style="left:2072px;top:840px;width:7px;height:7px;background:rgba(108,145,92,1.00);"></div>
<div style="left:2093px;top:840px;width:7px;height:7px;background:rgba(108,145,92,0.25);"></div>
<div style="left:2100px;top:840px;width:7px;height:7px;background:rgba(108,145,92,0.25);"></div>
<div style="left:2114px;top:840px;width:7px;height:7px;background:rgba(108,145,92,0.88);"></div>
<div style="left:2128px;top:840px;width:7px;height:7px;background:rgba(108,145,92,0.88);"></div>
<div style="left:2135px;top:840px;width:7px;height:7px;background:rgba(108,145,92,0.38);"></div>
<div style="left:2142px;top:840px;width:7px;height:7px;background:rgba(108,145,92,1.00);"></div>
<div style="left:2149px;top:840px;width:7px;height:7px;background:rgba(108,145,92,1.00);"></div>
<div style="left:2156px;top:840px;width:7px;height:7px;background:rgba(108,145,92,1.00);"></div>
<div style="left:2177px;top:840px;width:7px;height:7px;background:rgba(108,145,92,1.00);"></div>
<div style="left:2184px;top:840px;width:7px;height:7px;background:rgba(108,145,92,0.50);"></div>
<div style="left:2191px;top:840px;width:7px;height:7px;background:rgba(108,145,92,0.88);"></div>
<div style="left:2205px;top:840px;width:7px;height:7px;background:rgba(108,145,92,0.75);"></div>
<div style="left:2219px;top:840px;width:7px;height:7px;background:rgba(108,145,92,1.00);"></div>
<div style="left:2226px;top:840px;width:7px;height:7px;background:rgba(108,145,92,0.75);"></div>
<div style="left:2233px;top:840px;width:7px;height:7px;background:rgba(108,145,92,0.75);"></div>
<div style="left:2240px;top:840px;width:7px;height:7px;background:rgba(108,145,92,0.62);"></div>
<div style="left:1512.4px;top:945px;width:7px;height:7px;background:rgba(108,145,92,1.00);"></div>
<div style="left:1519.4px;top:945px;width:7px;height:7px;background:rgba(108,145,92,0.62);"></div>
<div style="left:1526.4px;top:945px;width:7px;height:7px;background:rgba(108,145,92,1.00);"></div>
<div style="left:1540.4px;top:945px;width:7px;height:7px;background:rgba(108,145,92,0.88);"></div>
<div style="left:1547.4px;top:945px;width:7px;height:7px;background:rgba(108,145,92,0.38);"></div>
<div style="left:1561.4px;top:945px;width:7px;height:7px;background:rgba(108,145,92,1.00);"></div>
<div style="left:1568.4px;top:945px;width:7px;height:7px;background:rgba(108,145,92,1.00);"></div>
<div style="left:1575.4px;top:945px;width:7px;height:7px;background:rgba(108,145,92,0.38);"></div>
<div style="left:1589.4px;top:945px;width:7px;height:7px;background:rgba(108,145,92,1.00);"></div>
<div style="left:1610.4px;top:945px;width:7px;height:7px;background:rgba(108,145,92,1.00);"></div>
<div style="left:1624.4px;top:945px;width:7px;height:7px;background:rgba(108,145,92,1.00);"></div>
<div style="left:1631.4px;top:945px;width:7px;height:7px;background:rgba(108,145,92,1.00);"></div>
<div style="left:1645.4px;top:945px;width:7px;height:7px;background:rgba(108,145,92,0.62);"></div>
<div style="left:1652.4px;top:945px;width:7px;height:7px;background:rgba(108,145,92,1.00);"></div>
<div style="left:1673.4px;top:945px;width:7px;height:7px;background:rgba(108,145,92,1.00);"></div>
<div style="left:1687.4px;top:945px;width:7px;height:7px;background:rgba(108,145,92,0.75);"></div>
<div style="left:1701.4px;top:945px;width:7px;height:7px;background:rgba(108,145,92,0.88);"></div>
<div style="left:1708.4px;top:945px;width:7px;height:7px;background:rgba(108,145,92,0.75);"></div>
<div style="left:1715.4px;top:945px;width:7px;height:7px;background:rgba(108,145,92,1.00);"></div>
<div style="left:1722.4px;top:945px;width:7px;height:7px;background:rgba(108,145,92,1.00);"></div>
<div style="left:1519.4px;top:952px;width:7px;height:7px;background:rgba(108,145,92,0.88);"></div>
<div style="left:1547.4px;top:952px;width:7px;height:7px;background:rgba(108,145,92,1.00);"></div>
<div style="left:1568.4px;top:952px;width:7px;height:7px;background:rgba(108,145,92,0.88);"></div>
<div style="left:1610.4px;top:952px;width:7px;height:7px;background:rgba(108,145,92,0.62);"></div>
<div style="left:1624.4px;top:952px;width:7px;height:7px;background:rgba(108,145,92,1.00);"></div>
<div style="left:1631.4px;top:952px;width:7px;height:7px;background:rgba(108,145,92,1.00);"></div>
<div style="left:1638.4px;top:952px;width:7px;height:7px;background:rgba(108,145,92,0.62);"></div>
<div style="left:1652.4px;top:952px;width:7px;height:7px;background:rgba(108,145,92,1.00);"></div>
<div style="left:1673.4px;top:952px;width:7px;height:7px;background:rgba(108,145,92,1.00);"></div>
<div style="left:1687.4px;top:952px;width:7px;height:7px;background:rgba(108,145,92,1.00);"></div>
<div style="left:1701.4px;top:952px;width:7px;height:7px;background:rgba(108,145,92,1.00);"></div>
<div style="left:1708.4px;top:952px;width:7px;height:7px;background:rgba(108,145,92,0.12);"></div>
<div style="left:1715.4px;top:952px;width:7px;height:7px;background:rgba(108,145,92,1.00);"></div>
<div style="left:1722.4px;top:952px;width:7px;height:7px;background:rgba(108,145,92,1.00);"></div>
<div style="left:1736.4px;top:952px;width:7px;height:7px;background:rgba(108,145,92,0.75);"></div>
<div style="left:1540.4px;top:959px;width:7px;height:3px;background:rgba(108,145,92,0.50);"></div>
<div style="left:1547.4px;top:959px;width:7px;height:3px;background:rgba(108,145,92,0.50);"></div>
<div style="left:1554.4px;top:959px;width:7px;height:3px;background:rgba(108,145,92,0.50);"></div>
<div style="left:1561.4px;top:959px;width:7px;height:3px;background:rgba(108,145,92,0.75);"></div>
<div style="left:1568.4px;top:959px;width:7px;height:3px;background:rgba(108,145,92,0.75);"></div>
<div style="left:1575.4px;top:959px;width:7px;height:3px;background:rgba(108,145,92,0.38);"></div>
<div style="left:1624.4px;top:959px;width:7px;height:3px;background:rgba(108,145,92,0.75);"></div>
<div style="left:1631.4px;top:959px;width:7px;height:3px;background:rgba(108,145,92,0.75);"></div>
<div style="left:1638.4px;top:959px;width:7px;height:3px;background:rgba(108,145,92,0.75);"></div>
<div style="left:1645.4px;top:959px;width:7px;height:3px;background:rgba(108,145,92,0.75);"></div>
<div style="left:1652.4px;top:959px;width:7px;height:3px;background:rgba(108,145,92,0.75);"></div>
<div style="left:1673.4px;top:959px;width:7px;height:3px;background:rgba(108,145,92,0.75);"></div>
<div style="left:1680.4px;top:959px;width:7px;height:3px;background:rgba(108,145,92,0.38);"></div>
<div style="left:1687.4px;top:959px;width:7px;height:3px;background:rgba(108,145,92,0.62);"></div>
<div style="left:1701.4px;top:959px;width:7px;height:3px;background:rgba(108,145,92,0.75);"></div>
<div style="left:1708.4px;top:959px;width:7px;height:3px;background:rgba(108,145,92,0.75);"></div>
<div style="left:1715.4px;top:959px;width:7px;height:3px;background:rgba(108,145,92,0.75);"></div>
<div style="left:1722.4px;top:959px;width:7px;height:3px;background:rgba(108,145,92,0.62);"></div>
<span class="t ui" id="wm" style="left:2534.55px;top:1105.48px;font-size:14.5px;color:#f6f6f6;letter-spacing:0.457px;font-family:'Liberation Sans','Noto Sans CJK SC',sans-serif;-webkit-text-stroke:0;text-shadow:0 0 2px #222;">安全客（www.anquanke.com）</span>
<div style="left:0px;top:0px;width:2752px;height:1px;background:#3a76c4;"></div>
<div style="left:0px;top:1px;width:1px;height:1143px;background:#34547f;"></div>
<div style="left:2750px;top:1px;width:1px;height:1143px;background:#3a6eaa;"></div>
<div style="left:2751px;top:0px;width:1px;height:1144px;background:#4094fc;"></div>
<div style="left:0px;top:1143px;width:2750px;height:1px;background:#3d5c84;"></div>
</div></body></html>
